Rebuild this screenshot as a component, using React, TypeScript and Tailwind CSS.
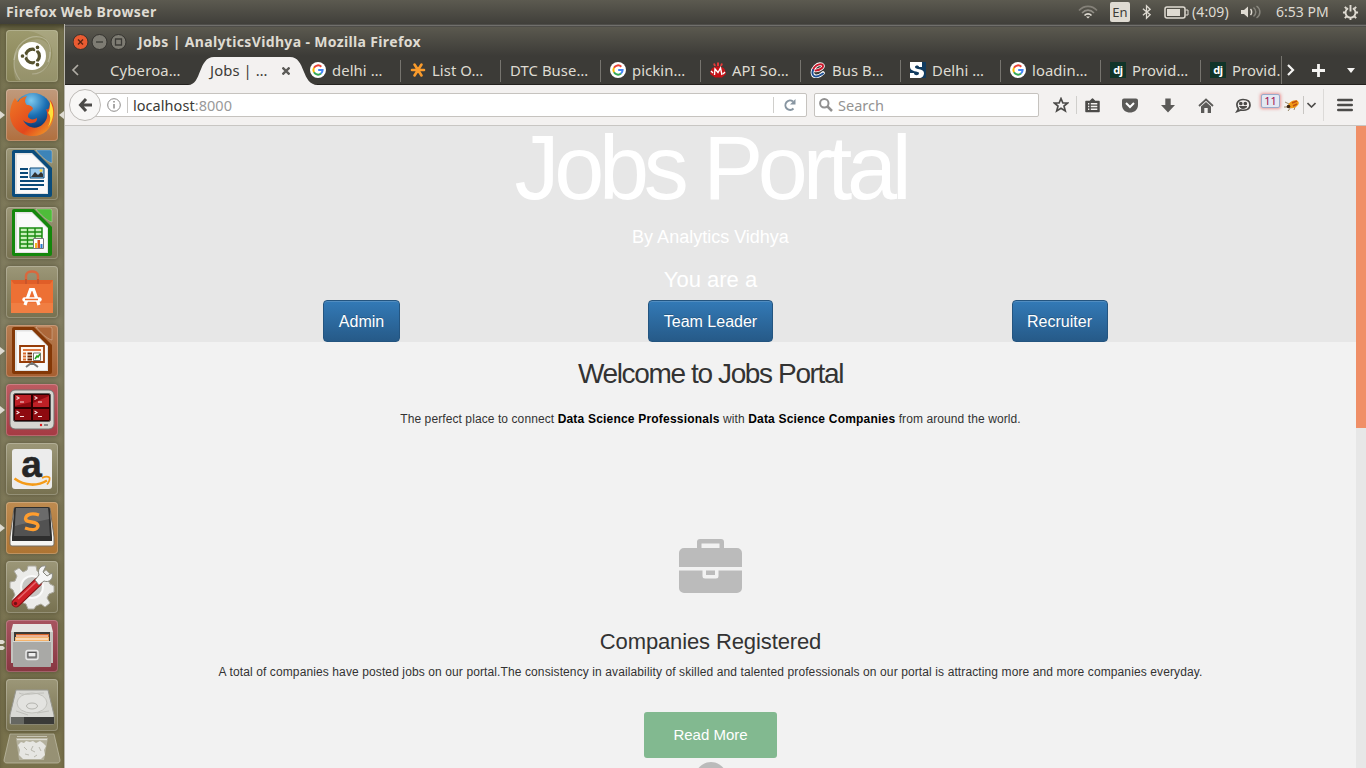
import React from "react";

const ui = "font-['Noto_Sans',sans-serif]";

/* ---------- Launcher ---------- */

function Tile({ tone, left, right, pair, children }: { tone: string; left?: boolean; right?: boolean; pair?: boolean; children: React.ReactNode }) {
  return (
    <div className="relative flex h-[52px] w-16 shrink-0 justify-center">
      <div className={"h-[52px] w-[52px] overflow-hidden rounded-[4px] shadow-[inset_0_0_0_1px_rgba(255,255,255,0.22),0_0_4px_1px_rgba(40,36,16,0.35)] " + tone}>
        <svg viewBox="0 0 52 52" className="h-[52px] w-[52px]">{children}</svg>
      </div>
      {left && <svg viewBox="0 0 5 8" className="absolute top-[22px] left-0 h-2 w-[5px]"><path d="M0 0L5 4L0 8Z" fill="#dedbd2" /></svg>}
      {right && <svg viewBox="0 0 5 8" className="absolute top-[22px] right-0 h-2 w-[5px]"><path d="M5 0L0 4L5 8Z" fill="#dedbd2" /></svg>}
      {pair && <svg viewBox="0 0 5 10" className="absolute top-[20px] left-0 h-2.5 w-[5px]"><path d="M0 0H3L5 2L3 4H0ZM0 6H3L5 8L3 10H0Z" fill="#dedbd2" /></svg>}
    </div>
  );
}

const plain = "bg-gradient-to-b from-[#9c9778] to-[#777150]";

function Doc({ color, fold, children }: { color: string; fold: string; children: React.ReactNode }) {
  return (
    <>
      <path d="M8 2H28L46 20V47a2 2 0 0 1-2 2H8a2 2 0 0 1-2-2V4a2 2 0 0 1 2-2Z" fill={color} />
      <path d="M30 2H44a2 2 0 0 1 2 2V15C41 14 34 7 30 2Z" fill={fold} stroke="#fff" strokeOpacity=".25" />
      <path d="M9 5H26L42 21V46H9Z" fill="#e2e2e2" />
      <path d="M11 6.500H26L41 21.500V45H11Z" fill="#fafafa" />
      {children}
    </>
  );
}

function Launcher() {
  return (
    <aside className="flex w-16 shrink-0 flex-col gap-[7px] bg-gradient-to-b from-[#77734f] via-[#858064] via-40% to-[#77704a] pt-1.5 shadow-[inset_0_5px_5px_-2px_rgba(30,28,15,0.6)]">
      <Tile tone="bg-gradient-to-b from-[#9d9a6e] to-[#858154]">
        <path d="M10 50C4 32 10 16 26 10C36 7 44 12 44 22C44 32 40 40 32 44C44 40 50 26 44 14C40 6 30 2 22 1H51V51H16Z" fill="#fff" fillOpacity=".13" />
        <path d="M8 30C9 14 22 5 34 7C44 9 47 20 42 32" fill="none" stroke="#fff" strokeOpacity=".28" strokeWidth="1.200" />
        <path d="M14 50C6 40 6 26 14 18M44 22C46 34 38 44 26 44" fill="none" stroke="#fff" strokeOpacity=".22" strokeWidth="1.200" />
        <circle cx="26" cy="26" r="14" fill="#fff" />
        <circle cx="26.500" cy="26" r="6.900" fill="none" stroke="#56522f" strokeWidth="3.200" />
        <g stroke="#fff" strokeWidth="1.300">
          <path d="M21 26H15M29 30L33 37M29 22L33 15" />
          <circle cx="16.500" cy="26" r="2.500" fill="#56522f" />
          <circle cx="31.500" cy="17.300" r="2.500" fill="#56522f" />
          <circle cx="31.500" cy="34.700" r="2.500" fill="#56522f" />
        </g>
      </Tile>
      <Tile tone="bg-gradient-to-b from-[#c09a7c] to-[#b06f3e]" left right>
        <defs>
          <radialGradient id="globe" cx=".45" cy=".2" r=".8"><stop offset="0" stopColor="#7cc8ee" /><stop offset=".5" stopColor="#1b6fb3" /><stop offset="1" stopColor="#0b2c63" /></radialGradient>
          <linearGradient id="fox" x1="0" y1="0" x2="1" y2="1"><stop offset="0" stopColor="#ef7a26" /><stop offset=".6" stopColor="#e2481c" /><stop offset="1" stopColor="#f4b02c" /></linearGradient>
        </defs>
        <circle cx="27" cy="23" r="19" fill="url(#globe)" />
        <path d="M44 11C47 14 49 20 48 27C46 41 36 48 25 47C13 46 4 37 4 25C4 19 6 13 9 9C10 11 11 12 12 13C14 9 17 8 21 7C19 10 18 13 21 16C24 16 27 18 27 20C24 23 22 24 22 28C24 31 28 31 31 29C32 36 20 35 17 31C20 38 30 42 37 35C42 30 42 25 40 20C43 22 44 17 44 11Z" fill="url(#fox)" />
        <path d="M44 12C49 20 48 31 42 38C46 29 44 26 42 24C44 21 44 17 44 12Z" fill="#ffe03a" />
      </Tile>
      <Tile tone={plain}>
        <Doc color="#0a4c7c" fold="#3d84b8">
          <path d="M14 21H22M14 25H22M14 29H22M14 33H38M14 37H38M14 41H32" stroke="#0b4a78" strokeWidth="2" />
          <path d="M24 20H38V30H24Z" fill="#9ecbee" stroke="#0b4a78" />
          <path d="M25 29L29 24L32 27L35 24L37 26V29Z" fill="#333" />
          <circle cx="35" cy="22.500" r="1.500" fill="#f4d24a" />
        </Doc>
      </Tile>
      <Tile tone={plain}>
        <Doc color="#14870c" fold="#4fbc3a">
          <path d="M14 21H36V41H14Z" fill="#c9f0bb" stroke="#198a10" strokeWidth="1.500" />
          <path d="M14 25H36M14 29H36M14 33H36M14 37H36M21.500 21V41M29 21V41" stroke="#198a10" strokeWidth="1.400" />
          <path d="M27.500 31.500H37.500V41.500H27.500Z" fill="#fff" stroke="#777" />
          <path d="M29 36H31V41H29Z" fill="#f2b51d" /><path d="M31.500 33H34V41H31.500Z" fill="#d6521c" /><path d="M34.500 37H36.500V41H34.500Z" fill="#2b7ad0" />
        </Doc>
      </Tile>
      <Tile tone={plain}>
        <path d="M20 19V10C20 4 32 4 32 10V19" fill="none" stroke="#d9683d" strokeWidth="2.500" />
        <path d="M5 14H47V46a1 1 0 0 1-1 1H6a1 1 0 0 1-1-1Z" fill="#ed7034" />
        <path d="M5 14H47L44 18H8Z" fill="#e05e28" />
        <path d="M5 37H47V47H5Z" fill="#f07e42" />
        <path d="M20 18V13M32 18V13" stroke="#c9552b" strokeWidth="2" />
        <path d="M19 39L24.500 23.500H27.500L33 39" fill="none" stroke="#fff" strokeWidth="3.200" />
        <path d="M18.500 33.500H33.500" stroke="#fff" strokeWidth="4.400" strokeLinecap="round" />
        <path d="M19 33.500H32" stroke="#ef6d2e" strokeWidth="1.500" />
      </Tile>
      <Tile tone="bg-gradient-to-b from-[#b67c50] to-[#a65f31]" left>
        <Doc color="#833807" fold="#ac6739">
          <path d="M14 21H38V37H14Z" fill="#fff7ef" stroke="#963c08" strokeWidth="1.800" />
          <path d="M17 25H35" stroke="#e07840" strokeWidth="2" /><path d="M17 28.500H20M17 31.500H20M17 34.500H20" stroke="#d76a2c" strokeWidth="2" /><path d="M21.500 28.500H26M21.500 31.500H26M21.500 34.500H26" stroke="#6a2400" strokeWidth="2" />
          <path d="M27.500 28H34.500V35.500H27.500Z" fill="#fff" stroke="#777" /><path d="M29 34L31 31L32 32L34 29" fill="none" stroke="#23a019" strokeWidth="1.500" />
          <path d="M26 37V39M20 42L24 39H28L32 42" fill="none" stroke="#777" strokeWidth="2" />
        </Doc>
      </Tile>
      <Tile tone="bg-gradient-to-b from-[#bd5b61] to-[#a53a43]" left>
        <rect x="4" y="6" width="44" height="39" rx="5" fill="#d6d6d1" stroke="#73736f" />
        <rect x="7.500" y="9.500" width="37" height="28" rx="2" fill="#2b0000" stroke="#555" />
        <path d="M9 11H25V23H9ZM27 11H43V23H27ZM9 25H25V36H9ZM27 25H43V36H27Z" fill="#8e0a10" />
        <path d="M27 23V19L43 12V23ZM9 11H25V18L9 22Z" fill="#d32a30" fillOpacity=".7" />
        <path d="M10.500 12.500L13 14L10.500 15.500M14 18H18M28.500 12.500L31 14L28.500 15.500M32 18H36M10.500 27L13 28.500L10.500 30M14 32.500H18M28.500 27L31 28.500L28.500 30M32 32.500H36" fill="none" stroke="#f6dede" strokeWidth="1.100" />
        <circle cx="35" cy="41" r="1.200" fill="#e0161b" /><path d="M38 41H42" stroke="#888" strokeWidth="2" />
      </Tile>
      <Tile tone={plain}>
        <rect x="6" y="6" width="40" height="40" rx="3" fill="#ececec" />
        <text x="25.500" y="34" textAnchor="middle" fontFamily="Liberation Sans, sans-serif" fontWeight="700" fontSize="37" fill="#262626" stroke="#262626" strokeWidth=".5">a</text>
        <path d="M8.500 35.500C19 43.500 32 43 41 37.500" fill="none" stroke="#f49b18" strokeWidth="2.600" />
        <path d="M36 35C39 33.500 42 33.500 43.500 34.500C44 36.500 43 39 41 41.500" fill="none" stroke="#f49b18" strokeWidth="1.800" />
      </Tile>
      <Tile tone="bg-gradient-to-b from-[#be8b50] to-[#ad7432]" left>
        <path d="M4 35L8 6H44L48 35V42a2 2 0 0 1-2 2H6a2 2 0 0 1-2-2Z" fill="#f5f5f3" stroke="#746c60" />
        <path d="M10 5H42a2 2 0 0 1 2 2L46 35V39H6V35L8 7a2 2 0 0 1 2-2Z" fill="#2e2e2e" />
        <path d="M10 6H42L44 34H8Z" fill="#525252" /><path d="M10 6H42L43 17C32 20 18 21 9 24Z" fill="#6b6b6b" />
        <path d="M33 13C24 10 18 14 20 18C22 21 32 19 32 24C31 29 25 28 19 26" fill="none" stroke="#ff9d2e" strokeWidth="3.400" />
      </Tile>
      <Tile tone={plain}>
        <path d="M22 5H30L31 10L36 12L40 9L45 14L42 19L44 23L48 25V31L43 33L41 37L44 42L39 46L35 43L30 45L28 48H22L20 43L15 41L11 44L6 39L9 34L7 29L4 27V21L9 20L11 15L8 10L13 7L17 11L21 9Z" fill="#ebebe9" stroke="#aaa89e" />
        <circle cx="26" cy="26" r="11" fill="#c7c7c4" stroke="#fafafa" strokeWidth="2" />
        <path d="M10 42L32 21" stroke="#851014" strokeWidth="9" strokeLinecap="round" />
        <path d="M10 42L32 21" stroke="#cf2128" strokeWidth="7" strokeLinecap="round" />
        <path d="M12 38L30 21" stroke="#e6656a" strokeWidth="1.500" />
        <circle cx="9.500" cy="42.500" r="1.700" fill="#731014" />
        <path d="M29 19L33 14C31 8 35 4 40 5L37 11L41 15L46 12C48 18 43 22 38 20L33 24Z" fill="#f6f6f6" stroke="#87877f" />
      </Tile>
      <Tile tone="bg-gradient-to-b from-[#a7545f] to-[#873641]" pair>
        <path d="M7 4H45L47 12H5Z" fill="#e6e6e3" /><path d="M5 12H47V43H5Z" fill="#c4c4c0" /><path d="M8 12H44V24H8Z" fill="#3c3a36" />
        <path d="M10 14H43V20H10Z" fill="#d6652a" /><path d="M9 17H43V22H9Z" fill="#f5b36b" /><path d="M10 16H42M10 19H42" stroke="#fff" />
        <path d="M7 21H45V46a1 1 0 0 1-1 1H8a1 1 0 0 1-1-1Z" fill="#a9a9a6" /><path d="M7 21.500H45" stroke="#d8d8d4" />
        <rect x="20" y="30.500" width="12" height="9" rx="2" fill="#999" stroke="#e9e9e9" strokeWidth="1.500" /><rect x="22" y="32.500" width="8" height="4.500" fill="#eee" stroke="#555" />
      </Tile>
      <Tile tone={plain}>
        <path d="M10 11H42L48 36V44a1 1 0 0 1-1 1H5a1 1 0 0 1-1-1V36Z" fill="#d9d9d5" stroke="#96968f" />
        <path d="M5 38H48V45H5Z" fill="#3a3a38" /><path d="M5 38H18V45H5Z" fill="#666762" />
        <ellipse cx="26" cy="24" rx="15" ry="10" fill="#e3e3e0" stroke="#c2c2bd" />
        <ellipse cx="26" cy="27" rx="5.500" ry="3" fill="none" stroke="#b4b4af" />
        <path d="M13 14C19 17 29 14 38 14M10 32L22 36M31 34L43 32" fill="none" stroke="#c0c0bb" />
      </Tile>
      <svg viewBox="0 0 64 31" className="-mt-[5px] h-[31px] w-16 shrink-0">
        <path d="M10 1H54L60 27C60 29 59 30 57 30H7C5 30 4 29 4 27Z" fill="#a7a38a" fillOpacity=".65" stroke="#c3c0ab" strokeOpacity=".7" />
        <path d="M16 5L19 27H44L48 5Z" fill="#d2d1c7" fillOpacity=".5" />
        <path d="M18 12L21 9L24 10L26 8L30 9L33 8L36 10L40 8L43 10L46 13L44 17L45 22L41 26H23L19 22L20 17Z" fill="#e6e6e2" />
        <path d="M24 14L27 17M33 13L31 17L35 19M39 14L41 18M25 21L29 22M37 22L34 24" fill="none" stroke="#b9b8ae" />
        <path d="M17 6.500H47" stroke="#dedcd2" strokeWidth="1.300" /><path d="M17 3.500H47" stroke="#c9c6b6" />
      </svg>
    </aside>
  );
}

/* ---------- System bar ---------- */

function SystemBar() {
  return (
    <header className={"flex h-6 shrink-0 items-center bg-gradient-to-b from-[#5c5a50] to-[#403f3a] text-[#dfdbd2] " + ui}>
      <span className="ml-[6px] flex-1 text-[14px] leading-6 font-bold tracking-[0.38px]">Firefox Web Browser</span>
      <svg viewBox="0 0 20 14" className="mr-[12px] h-3.5 w-5" fill="none" stroke="#dfdbd2" strokeWidth="1.600">
        <path d="M1 5.500C6 0 14 0 19 5.500" strokeOpacity=".35" /><path d="M4 8C7.500 4.200 12.500 4.200 16 8" strokeOpacity=".45" /><path d="M6.500 10.500C8.500 8.300 11.500 8.300 13.500 10.500" /><path d="M10 13.500L8 11.500H12Z" fill="#dfdbd2" stroke="none" />
      </svg>
      <span className="mr-[12px] flex h-5 w-5 items-center justify-center rounded-[2px] bg-[#dfdbd2] pt-px text-[13px] text-[#3c3b37]">En</span>
      <svg viewBox="0 0 10 16" className="mr-[13px] h-4 w-[9px]" fill="none" stroke="#dfdbd2" strokeWidth="1.400"><path d="M1 4.500L9 11L5 15V1L9 5L1 11.500" /></svg>
      <svg viewBox="0 0 25 13" className="mr-[3px] h-[13px] w-[25px]"><rect x="1" y="1" width="20" height="11" rx="2" fill="none" stroke="#dfdbd2" strokeWidth="1.500" /><path d="M3 3H16V10H3Z" fill="#dfdbd2" /><path d="M21.500 4H24V9H21.500" fill="none" stroke="#dfdbd2" /></svg>
      <span className="mr-[11px] w-[38px] text-[14px] leading-6 tracking-[0.1px] whitespace-nowrap">(4:09)</span>
      <svg viewBox="0 0 21 14" className="mr-[14px] h-3.5 w-[21px]" fill="none" stroke="#dfdbd2" strokeWidth="1.500"><path d="M0 5H3L7 1.500V12.500L3 9H0Z" fill="#dfdbd2" stroke="none" /><path d="M9.500 4C11 5.500 11 8.500 9.500 10" /><path d="M12.500 2.500C15.500 5 15.500 9 12.500 11.500M15.500 1C20 4 20 10 15.500 13" strokeOpacity=".4" /></svg>
      <span className="mr-[13px] w-[53px] text-[14px] leading-6 whitespace-nowrap">6:53 PM</span>
      <svg viewBox="0 0 18 18" className="mr-[7px] h-[17px] w-[17px]" fill="none" stroke="#dfdbd2"><path d="M6.500 4.500A5.300 5.300 0 1 0 11.500 4.500" strokeWidth="2" /><path d="M9 1V8M1 9H4M14 9H17M3 3L5 5M15 3L13 5M3 15L5 13M15 15L13 13M9 14V17" strokeWidth="2" /></svg>
    </header>
  );
}

/* ---------- Tabs ---------- */

function Google() {
  return (
    <svg viewBox="0 0 16 16" className="h-4 w-4 shrink-0" fill="none" strokeWidth="2">
      <circle cx="8" cy="8" r="8" fill="#fff" />
      <path d="M11.300 4.700A4.600 4.600 0 0 0 4 5.800" stroke="#ea4335" /><path d="M4 5.800A4.600 4.600 0 0 0 4 10.300" stroke="#fbbc05" /><path d="M4 10.300A4.600 4.600 0 0 0 11 11.500" stroke="#34a853" /><path d="M11 11.500A4.600 4.600 0 0 0 12.600 8H8.200" stroke="#4285f4" />
    </svg>
  );
}
const Burst = () => <svg viewBox="0 0 16 16" className="h-4 w-4 shrink-0" stroke="#f99b2c" strokeWidth="2.600" strokeLinecap="round"><path d="M2 8H14M4.500 2.500L11.500 13.500M11.500 2.500L4.500 13.500" /></svg>;
const Mashape = () => <svg viewBox="0 0 16 16" className="h-4 w-4 shrink-0"><path d="M5 4L4 1.500M8 4V0.500M11 4L12 1.500" stroke="#e43a3a" strokeWidth="2" /><path d="M1 8C3 3 13 3 15 8L16 12L12 15.500H5L0 12Z" fill="#c41217" /><path d="M4.500 13L5 7L8 10.500L10.500 6L12 13M1 9L3 11M13 12L15 10" fill="none" stroke="#fff" strokeWidth="1.400" /></svg>;
const Swirl = () => <svg viewBox="0 0 16 16" className="h-4 w-4 shrink-0" fill="none" strokeLinecap="round"><path d="M5.500 8.500C11 8.500 15 4 12 2.500C7 0.500 2 7 2.500 11C3 16 9 15 13 11" stroke="#fff" strokeWidth="3.600" /><path d="M5.500 8.500C11 8.500 15 4 12 2.500C8 1 4 5 3 8" stroke="#c9182b" strokeWidth="2" /><path d="M3 8C1 14 5 17 13 11.500" stroke="#1d4f93" strokeWidth="2" /></svg>;
const Scribd = () => <svg viewBox="0 0 16 16" className="h-4 w-4 shrink-0"><path d="M0 0H16V16H0Z" fill="#113b5f" /><path d="M0 0H12V5H9C9 3 5 3 5 5C5 8 14 6 14 11C14 14 12 16 9 16H0V11H4C4 14 9 14 9 11C9 9 0 10 0 5Z" fill="#fff" /></svg>;
const Django = () => <span className="flex h-4 w-4 shrink-0 items-center justify-center bg-[#103428] pb-[2px] text-[11px] leading-none font-bold tracking-[-0.3px] text-white">dj</span>;

const tabs: { label: string; icon?: React.ReactNode }[] = [
  { label: "delhi …", icon: <Google /> },
  { label: "List O…", icon: <Burst /> },
  { label: "DTC Buse…" },
  { label: "pickin…", icon: <Google /> },
  { label: "API So…", icon: <Mashape /> },
  { label: "Bus B…", icon: <Swirl /> },
  { label: "Delhi …", icon: <Scribd /> },
  { label: "loadin…", icon: <Google /> },
  { label: "Provid…", icon: <Django /> },
  { label: "Provid.", icon: <Django /> },
];

function TabStrip() {
  return (
    <div className={"flex h-[29px] shrink-0 border-b border-[#24221f] bg-[#3c3b37] text-[14.800px] tracking-[0.1px] text-[#dfdbd2] " + ui}>
      <div className="flex w-[35px] items-center pl-[6px]"><svg viewBox="0 0 8 12" className="h-3 w-2" fill="none" stroke="#b0ada5" strokeWidth="1.700"><path d="M7 1L2 6L7 11" /></svg></div>
      <div className="flex w-[100px] items-center pl-[10px] leading-7 tracking-[0.2px] whitespace-nowrap">Cyberoa…</div>
      <div className="relative flex w-[100px] items-center pl-[10px] text-[#3c3b37]">
        <svg viewBox="0 0 130 29" className="absolute top-0 -left-[12px] z-0 h-[29px] w-[130px]"><path d="M0 29C14 29 10 1 26 1H102C118 1 113 29 130 29Z" fill="#f3f1f0" /></svg>
        <span className="z-10 w-[72px] leading-7 whitespace-nowrap">Jobs | …</span>
        <svg viewBox="0 0 8 8" className="z-10 mt-px h-2 w-2" stroke="#5b5a57" strokeWidth="2.300"><path d="M0.500 0.500L7.500 7.500M7.500 0.500L0.500 7.500" /></svg>
      </div>
      {tabs.map((t, i) => (
        <div key={i} className={"flex shrink-0 items-center " + (i === 9 ? "w-[81px]" : "w-[100px]")}>
          <div className={"mt-px h-[22px] w-px " + (i === 0 ? "bg-transparent" : "bg-[#76746e]")} />
          <div className="flex items-center gap-[6px] pl-[9px] leading-7 whitespace-nowrap">{t.icon}<span>{t.label}</span></div>
        </div>
      ))}
      <div className="flex flex-1 items-center border-l border-[#76746e] pl-[5px]">
        <svg viewBox="0 0 8 12" className="mr-[17px] h-3 w-2" fill="none" stroke="#f5f4f2" strokeWidth="2.200"><path d="M1 1L6 6L1 11" /></svg>
        <svg viewBox="0 0 13 13" className="mr-[22px] h-[13px] w-[13px]" stroke="#f5f4f2" strokeWidth="2.800"><path d="M6.500 0V13M0 6.500H13" /></svg>
        <svg viewBox="0 0 8 5" className="mt-px h-[5px] w-2"><path d="M0 0H8L4 5Z" fill="#f5f4f2" /></svg>
      </div>
    </div>
  );
}

/* ---------- Toolbar ---------- */

function Toolbar() {
  const g = "#4c4b49";
  return (
    <div className={"flex h-[41px] shrink-0 items-center border-b border-[#c8c6c3] bg-[#f3f1f0] text-[14.500px] " + ui}>
      <div className="z-10 ml-[4px] flex h-8 w-8 shrink-0 items-center justify-center rounded-full border border-[#bdbab6] bg-[#f8f7f6]">
        <svg viewBox="0 0 15 14" className="h-3.5 w-[15px]" fill="none" stroke={g} strokeWidth="3"><path d="M8 1L2.500 7L8 13M3 7H14" /></svg>
      </div>
      <div className="-ml-[6px] flex h-6 w-[712px] shrink-0 items-center rounded-r-[2px] border border-[#c6c3bf] bg-white pl-[11px]">
        <svg viewBox="0 0 14 14" className="mr-[6px] h-3.5 w-3.5" fill="none" stroke="#8c8b89"><circle cx="7" cy="7" r="6.300" /><path d="M7 6V10.500M7 3V4.500" strokeWidth="1.500" /></svg>
        <div className="mr-[5px] h-4 w-px bg-[#c8c6c3]" />
        <span className="flex-1 pt-px tracking-[0.05px] text-[#3a3935]">localhost<span className="text-[#999]">:8000</span></span>
        <div className="h-4 w-px bg-[#d0cfcc]" />
        <svg viewBox="0 0 12 12" className="mr-[10px] ml-[10px] h-3 w-3" fill="none" stroke="#8795a1" strokeWidth="2"><path d="M9.500 9.500A4.700 4.700 0 1 1 9 2.500" /><path d="M11.500 0V5.500H6Z" fill="#8795a1" stroke="none" /></svg>
      </div>
      <div className="ml-[7px] flex h-6 w-[225px] shrink-0 items-center rounded-[2px] border border-[#c6c3bf] bg-white pl-[4px]">
        <svg viewBox="0 0 14 14" className="mr-[5px] h-3.5 w-3.5" fill="none" stroke="#919090" strokeWidth="2"><circle cx="5.300" cy="5.300" r="4.200" /><path d="M8.500 8.500L13 13" strokeWidth="2.500" /></svg>
        <span className="pt-px text-[#949392]">Search</span>
      </div>
      <svg viewBox="0 0 16 16" className="mr-[7px] ml-[14px] h-4 w-4" fill="none" stroke={g} strokeWidth="1.700"><path d="M8 1.600L9.900 6H14.600L11 9.100L12.300 14L8 11.300L3.700 14L5 9.100L1.400 6H6.100Z" /></svg>
      <div className="mr-[8px] h-[18px] w-px bg-[#d0cfcc]" />
      <svg viewBox="0 0 15 15" className="mr-[22px] h-[15px] w-[15px]" fill="none" stroke={g} strokeWidth="1.500"><path d="M1 3.500H5L7.500 1L10 3.500H14V13.500H1Z" fill={g} strokeLinejoin="round" /><path d="M3 5.800H4.300M5.800 5.800H12.300M3 8.500H4.300M5.800 8.500H12.300M3 11.200H4.300M5.800 11.200H12.300" stroke="#f3f1f0" strokeWidth="1.400" /></svg>
      <svg viewBox="0 0 16 15" className="mr-[22px] h-[15px] w-4"><path d="M2 0.500H14a2 2 0 0 1 2 2V7C16 17 0 17 0 7V2.500a2 2 0 0 1 2-2Z" fill="#5b5a58" /><path d="M4 5L8 9L12 5" fill="none" stroke="#fff" strokeWidth="2" /></svg>
      <svg viewBox="0 0 16 15" className="mr-[22px] h-[15px] w-4"><path d="M5.300 0.500H10.700V7H15L8 14.500L1 7H5.300Z" fill="#5b5a58" /></svg>
      <svg viewBox="0 0 16 15" className="mr-[21px] h-[15px] w-4"><path d="M1 8L8 1.500L15 8" fill="none" stroke="#5b5a58" strokeWidth="1.800" /><path d="M3 8.500L8 4L13 8.500V15H9.700V10H6.300V15H3Z" fill="#5b5a58" /></svg>
      <svg viewBox="0 0 16 15" className="mr-[10px] h-[15px] w-4" fill="none" stroke={g} strokeWidth="1.700"><path d="M3.500 11C-0.500 5 4 1.500 8 1.500C13 1.500 15 4 15 7C15 11 11 13 6 12L2 13.500Z" fill="#f3f1f0" /><path d="M4.500 8.500C6 11 10 11 12 8.500Z" fill={g} strokeWidth="1" /><circle cx="5.800" cy="5.500" r="1" fill={g} /><circle cx="10.300" cy="5.500" r="1" fill={g} /></svg>
      <span className="mb-[9px] flex h-[14px] w-[19px] shrink-0 items-center justify-center rounded-[2px] border border-[#9aaaca] bg-[#e3e8f2] text-[11px] leading-none text-[#a10f4e] shadow-[0_0_3px_1px_rgba(230,70,70,0.5)]">11</span>
      <svg viewBox="0 0 16 14" className="mr-[3px] ml-[4px] h-3.5 w-4"><path d="M1 4L5 6M0 9H5M4 13L7 9M10 12L11 9" stroke="#7d6b45" strokeWidth=".8" /><ellipse cx="9.500" cy="6" rx="5.500" ry="3.600" transform="rotate(-25 10 6)" fill="#f09a17" /><path d="M8 5L13 3M9 8L13 6" stroke="#c2500f" strokeWidth="1.500" /><circle cx="4.500" cy="8.500" r="1.800" fill="#3f2610" /></svg>
      <div className="mr-[3px] h-[18px] w-px bg-[#c8c6c3]" />
      <svg viewBox="0 0 9 6" className="mr-[7px] h-1.5 w-[9px]" fill="none" stroke={g} strokeWidth="1.600"><path d="M0.500 1L4.500 5L8.500 1" /></svg>
      <div className="mr-[13px] h-8 w-px bg-[#dcdad8]" />
      <svg viewBox="0 0 16 14" className="h-3.5 w-4" stroke={g} strokeWidth="2.400" strokeLinecap="round"><path d="M1.200 2H14.800M1.200 7H14.800M1.200 12H14.800" /></svg>
    </div>
  );
}

/* ---------- Page ---------- */

const button = "flex h-[42px] items-center justify-center rounded-[4px] border border-[#245580] bg-gradient-to-b from-[#337ab7] to-[#265a88] pt-px text-[16px] text-white shadow-[inset_0_1px_0_rgba(255,255,255,0.15)] [text-shadow:0_-1px_0_rgba(0,0,0,0.2)] ";

function Page() {
  return (
    <div className="flex min-h-0 flex-1 bg-[#e7e7e7] font-['Liberation_Sans',sans-serif]">
      <main className="flex w-[1291px] shrink-0 flex-col bg-[#f2f2f2] text-center text-[#333]">
        <section className="flex h-[216px] shrink-0 flex-col bg-[#e7e7e7] text-white">
          <h1 className="h-[98px] text-[90px] leading-[85px] tracking-[-5.300px]">Jobs Portal</h1>
          <p className="h-[43px] text-[18px] leading-[26px]">By Analytics Vidhya</p>
          <h3 className="h-[33px] text-[22px] leading-[26px]">You are a</h3>
          <div className="mx-auto grid w-[1047px] grid-cols-3 justify-items-center">
            <a className={button + "w-[77px]"}>Admin</a>
            <a className={button + "w-[125px]"}>Team Leader</a>
            <a className={button + "w-[96px]"}>Recruiter</a>
          </div>
        </section>
        <h2 className="mt-[14px] text-[28px] leading-9 tracking-[-1.370px]">Welcome to Jobs Portal</h2>
        <p className="mt-[18px] text-[12px] leading-[18px] tracking-[0.090px] whitespace-nowrap">The perfect place to connect <b className="tracking-[0.2px] text-black">Data Science Professionals</b> with <b className="tracking-[0.2px] text-black">Data Science Companies</b> from around the world.</p>
        <svg viewBox="0 0 63 54" className="mx-auto mt-[111px] h-[54px] w-[63px] shrink-0" fill="#bbb">
          <path fillRule="evenodd" d="M18 9V3a3 3 0 0 1 3-3H42a3 3 0 0 1 3 3V9H58a5 5 0 0 1 5 5V28H0V14A5 5 0 0 1 5 9ZM22.500 9H40.500V4.500H22.500Z" />
          <path d="M0 31.500H23.500V37a2.500 2.500 0 0 0 2.500 2.500H37A2.500 2.500 0 0 0 39.500 37V31.500H63V49a5 5 0 0 1-5 5H5a5 5 0 0 1-5-5Z" /><path d="M27 31.500H36V36H27Z" />
        </svg>
        <h3 className="mt-[36px] text-[22px] leading-[26px] tracking-[-0.120px]">Companies Registered</h3>
        <p className="mt-[8px] text-[12px] leading-[18px] tracking-[0.110px] whitespace-nowrap">A total of companies have posted jobs on our portal.The consistency in availability of skilled and talented professionals on our portal is attracting more and more companies everyday.</p>
        <a className="mx-auto mt-[31px] flex h-[46px] w-[133px] shrink-0 items-center justify-center rounded-[3px] bg-[#82b990] text-[15px] text-white">Read More</a>
        <svg viewBox="0 0 32 6" className="mx-auto mt-[4px] h-1.5 w-8 shrink-0"><circle cx="16" cy="16" r="16" fill="#bbb" /></svg>
      </main>
      <div className="w-[10px] shrink-0"><div className="h-[302px] bg-[#f08f67]" /></div>
    </div>
  );
}

export default function App() {
  return (
    <div className="flex h-[768px] w-[1366px] flex-col overflow-hidden bg-[#3c3b37]">
      <SystemBar />
      <div className="flex min-h-0 flex-1">
        <Launcher />
        <div className="flex w-[1302px] shrink-0 flex-col border-l border-[#b9b6ac]">
          <div className="h-[3px] shrink-0 border-y border-[#4e4d49] bg-[#706f6c]" />
          <div className={"flex h-[29px] shrink-0 items-center bg-gradient-to-b from-[#5b594f] to-[#3c3b37] text-[#dfdbd2] " + ui}>
            <svg viewBox="0 0 54 16" className="ml-[8px] h-4 w-[54px]">
              <circle cx="7.500" cy="8" r="7.500" fill="#ea5b31" stroke="#34332f" /><path d="M5 5.500L10 10.500M10 5.500L5 10.500" stroke="#5a2413" strokeWidth="1.400" />
              <circle cx="26.500" cy="8" r="7.500" fill="#7e7c73" stroke="#34332f" /><path d="M23 8H30" stroke="#3c3b37" strokeWidth="1.300" />
              <circle cx="45.500" cy="8" r="7.500" fill="#7e7c73" stroke="#34332f" /><path d="M42.500 5H48.500V11H42.500Z" fill="none" stroke="#3c3b37" strokeWidth="1.300" />
            </svg>
            <span className="ml-[11px] text-[14px] leading-7 font-bold tracking-[0.35px] whitespace-nowrap">Jobs | AnalyticsVidhya - Mozilla Firefox</span>
          </div>
          <TabStrip />
          <Toolbar />
          <Page />
        </div>
      </div>
    </div>
  );
}
